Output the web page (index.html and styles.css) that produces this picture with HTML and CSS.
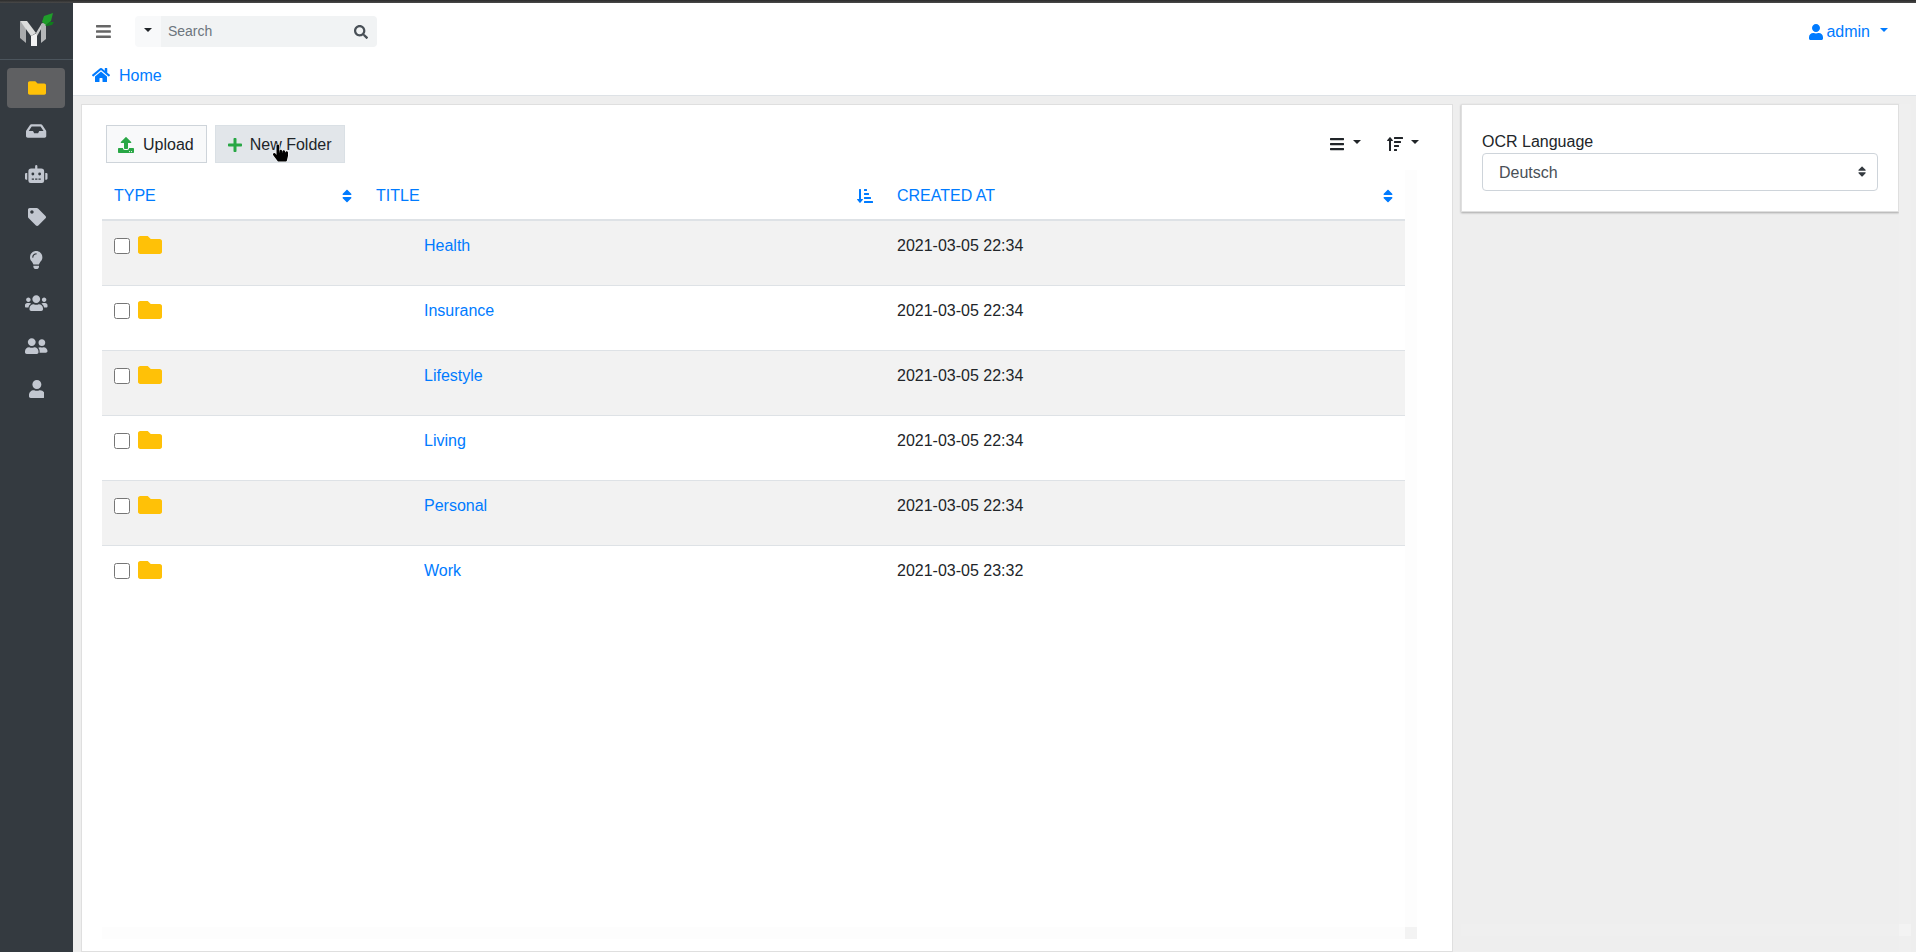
FILE: index.html
```html
<!DOCTYPE html>
<html lang="en">
<head>
  <meta charset="UTF-8" />
  <meta name="viewport" content="width=device-width, initial-scale=1.0"/>
  <title>Documents</title>
  <link rel="stylesheet" href="styles.css">
</head>
<body>

  <!-- Icon set -->
  <svg class="icon-defs" aria-hidden="true">
    <defs>
      <path id="i-folder" d="M464 128H272l-64-64H48C21.49 64 0 85.49 0 112v288c0 26.51 21.49 48 48 48h416c26.51 0 48-21.49 48-48V176c0-26.51-21.49-48-48-48z"/>
      <path id="i-inbox" d="M567.938 243.908L462.25 85.374A48.003 48.003 0 0 0 422.311 64H153.689a48 48 0 0 0-39.938 21.374L8.062 243.908A47.994 47.994 0 0 0 0 270.533V400c0 26.51 21.49 48 48 48h480c26.51 0 48-21.49 48-48V270.533a47.994 47.994 0 0 0-8.062-26.625zM162.252 128h251.497l85.333 128H376l-32 64H232l-32-64H76.918l85.334-128z"/>
      <path id="i-robot" d="M32,224H64V416H32A31.96166,31.96166,0,0,1,0,384V256A31.96166,31.96166,0,0,1,32,224Zm512-48V448a64.06328,64.06328,0,0,1-64,64H160a64.06328,64.06328,0,0,1-64-64V176a79.974,79.974,0,0,1,80-80H288V32a32,32,0,0,1,64,0V96H464A79.974,79.974,0,0,1,544,176ZM264,256a40,40,0,1,0-40,40A39.997,39.997,0,0,0,264,256Zm-8,128H192v32h64Zm96,0H288v32h64ZM456,256a40,40,0,1,0-40,40A39.997,39.997,0,0,0,456,256Zm-8,128H384v32h64ZM640,256V384a31.96166,31.96166,0,0,1-32,32H576V224h32A31.96166,31.96166,0,0,1,640,256Z"/>
      <path id="i-tag" d="M0 252.118V48C0 21.49 21.49 0 48 0h204.118a48 48 0 0 1 33.941 14.059l211.882 211.882c18.745 18.745 18.745 49.137 0 67.882L293.823 497.941c-18.745 18.745-49.137 18.745-67.882 0L14.059 286.059A48 48 0 0 1 0 252.118zM112 64c-26.51 0-48 21.49-48 48s21.49 48 48 48 48-21.49 48-48-21.49-48-48-48z"/>
      <path id="i-bulb" d="M96.06 454.35c.01 6.29 1.87 12.45 5.36 17.69l17.09 25.69a31.99 31.99 0 0 0 26.64 14.28h61.71a31.99 31.99 0 0 0 26.64-14.28l17.09-25.69a31.989 31.989 0 0 0 5.36-17.69l.04-38.35H96.01l.05 38.35zM0 176c0 44.37 16.45 84.85 43.56 115.78 16.52 18.85 42.36 58.23 52.21 91.45.04.26.07.52.11.78h160.24c.04-.26.07-.51.11-.78 9.85-33.22 35.69-72.6 52.21-91.45C335.55 260.85 352 220.37 352 176 352 78.61 272.91-.3 175.45 0 73.44.31 0 82.97 0 176zm176-80c-44.11 0-80 35.89-80 80 0 8.84-7.16 16-16 16s-16-7.16-16-16c0-61.76 50.24-112 112-112 8.84 0 16 7.16 16 16s-7.16 16-16 16z"/>
      <path id="i-users" d="M96 224c35.3 0 64-28.7 64-64s-28.7-64-64-64-64 28.7-64 64 28.7 64 64 64zm448 0c35.3 0 64-28.7 64-64s-28.7-64-64-64-64 28.7-64 64 28.7 64 64 64zm32 32h-64c-17.6 0-33.5 7.1-45.1 18.6 40.3 22.1 68.9 62 75.1 109.4h66c17.7 0 32-14.3 32-32v-32c0-35.3-28.7-64-64-64zm-256 0c61.9 0 112-50.1 112-112S381.9 32 320 32 208 82.1 208 144s50.1 112 112 112zm76.8 32h-8.3c-20.8 10-43.9 16-68.5 16s-47.6-6-68.5-16h-8.3C179.6 288 128 339.6 128 403.2V432c0 26.5 21.5 48 48 48h288c26.5 0 48-21.5 48-48v-28.8c0-63.6-51.6-115.2-115.2-115.2zm-223.7-13.4C161.5 263.1 145.6 256 128 256H64c-35.3 0-64 28.7-64 64v32c0 17.7 14.3 32 32 32h65.9c6.3-47.4 34.9-87.3 75.2-109.4z"/>
      <path id="i-friends" d="M192 256c61.9 0 112-50.1 112-112S253.9 32 192 32 80 82.1 80 144s50.1 112 112 112zm76.8 32h-8.3c-20.8 10-43.9 16-68.5 16s-47.6-6-68.5-16h-8.3C51.6 288 0 339.6 0 403.2V432c0 26.5 21.5 48 48 48h288c26.5 0 48-21.5 48-48v-28.8c0-63.6-51.6-115.2-115.2-115.2zM480 256c53 0 96-43 96-96s-43-96-96-96-96 43-96 96 43 96 96 96zm48 32h-3.8c-13.9 4.8-28.6 8-44.2 8s-30.3-3.2-44.2-8H432c-20.4 0-39.2 5.9-55.7 15.4 24.4 26.3 39.7 61.2 39.7 99.8v38.4c0 2.2-.5 4.3-.6 6.4H592c26.5 0 48-21.5 48-48 0-61.9-50.1-112-112-112z"/>
      <path id="i-user" d="M224 256c70.7 0 128-57.3 128-128S294.7 0 224 0 96 57.3 96 128s57.3 128 128 128zm89.6 32h-16.7c-22.2 10.2-46.9 16-72.9 16s-50.6-5.8-72.9-16h-16.7C60.2 288 0 348.2 0 422.4V464c0 26.5 21.5 48 48 48h352c26.5 0 48-21.5 48-48v-41.6c0-74.2-60.2-134.4-134.4-134.4z"/>
      <path id="i-home" d="M280.37 148.26L96 300.11V464a16 16 0 0 0 16 16l112.06-.29a16 16 0 0 0 15.92-16V368a16 16 0 0 1 16-16h64a16 16 0 0 1 16 16v95.64a16 16 0 0 0 16 16.05L464 480a16 16 0 0 0 16-16V300L295.67 148.26a12.19 12.19 0 0 0-15.3 0zM571.6 251.47L488 182.56V44.05a12 12 0 0 0-12-12h-56a12 12 0 0 0-12 12v72.61L318.47 43a48 48 0 0 0-61 0L4.34 251.47a12 12 0 0 0-1.6 16.9l25.5 31A12 12 0 0 0 45.15 301l235.22-193.74a12.19 12.19 0 0 1 15.3 0L530.9 301a12 12 0 0 0 16.9-1.6l25.5-31a12 12 0 0 0-1.7-16.93z"/>
      <path id="i-search" d="M505 442.7L405.3 343c-4.5-4.5-10.6-7-17-7H372c27.6-35.3 44-79.7 44-128C416 93.1 322.9 0 208 0S0 93.1 0 208s93.1 208 208 208c48.3 0 92.7-16.4 128-44v16.3c0 6.4 2.5 12.5 7 17l99.7 99.7c9.4 9.4 24.6 9.4 33.9 0l28.3-28.3c9.4-9.4 9.4-24.6.1-34zM208 336c-70.7 0-128-57.2-128-128 0-70.7 57.2-128 128-128 70.7 0 128 57.2 128 128 0 70.7-57.2 128-128 128z"/>
      <path id="i-bars" d="M16 132h416c8.837 0 16-7.163 16-16V76c0-8.837-7.163-16-16-16H16C7.163 60 0 67.163 0 76v40c0 8.837 7.163 16 16 16zm0 160h416c8.837 0 16-7.163 16-16v-40c0-8.837-7.163-16-16-16H16c-8.837 0-16 7.163-16 16v40c0 8.837 7.163 16 16 16zm0 160h416c8.837 0 16-7.163 16-16v-40c0-8.837-7.163-16-16-16H16c-8.837 0-16 7.163-16 16v40c0 8.837 7.163 16 16 16z"/>
      <path id="i-plus" d="M416 208H272V64c0-17.67-14.33-32-32-32h-32c-17.67 0-32 14.33-32 32v144H32c-17.67 0-32 14.33-32 32v32c0 17.67 14.33 32 32 32h144v144c0 17.67 14.33 32 32 32h32c17.67 0 32-14.33 32-32V304h144c17.67 0 32-14.33 32-32v-32c0-17.67-14.33-32-32-32z"/>
      <path id="i-upload" d="M296 384h-80c-13.3 0-24-10.7-24-24V192h-87.7c-17.8 0-26.7-21.5-14.1-34.1L242.3 5.7c7.5-7.5 19.8-7.5 27.3 0l152.2 152.2c12.6 12.6 3.7 34.1-14.1 34.1H320v168c0 13.3-10.7 24-24 24zm216-8v112c0 13.3-10.7 24-24 24H24c-13.3 0-24-10.7-24-24V376c0-13.3 10.7-24 24-24h136v8c0 30.9 25.1 56 56 56h80c30.9 0 56-25.1 56-56v-8h136c13.3 0 24 10.7 24 24zm-124 88c0-11-9-20-20-20s-20 9-20 20 9 20 20 20 20-9 20-20zm64 0c0-11-9-20-20-20s-20 9-20 20 9 20 20 20 20-9 20-20z"/>
      <path id="i-sort" d="M41 288h238c21.4 0 32.1 25.9 17 41L177 448c-9.4 9.4-24.6 9.4-33.9 0L24 329c-15.1-15.1-4.4-41 17-41zm255-105L177 64c-9.4-9.4-24.6-9.4-33.9 0L24 183c-15.1 15.1-4.4 41 17 41h238c21.4 0 32.1-25.9 17-41z"/>
      <path id="i-sort-down" d="M240 96h64a16 16 0 0 0 16-16V48a16 16 0 0 0-16-16h-64a16 16 0 0 0-16 16v32a16 16 0 0 0 16 16zm0 128h128a16 16 0 0 0 16-16v-32a16 16 0 0 0-16-16H240a16 16 0 0 0-16 16v32a16 16 0 0 0 16 16zm256 192H240a16 16 0 0 0-16 16v32a16 16 0 0 0 16 16h256a16 16 0 0 0 16-16v-32a16 16 0 0 0-16-16zm-256-64h192a16 16 0 0 0 16-16v-32a16 16 0 0 0-16-16H240a16 16 0 0 0-16 16v32a16 16 0 0 0 16 16zm-64 0h-48V48a16 16 0 0 0-16-16H80a16 16 0 0 0-16 16v304H16c-14.19 0-21.37 17.24-11.29 27.31l80 96a16 16 0 0 0 22.62 0l80-96C197.35 369.26 190.22 352 176 352z"/>
      <path id="i-sort-up" d="M304 416h-64a16 16 0 0 0-16 16v32a16 16 0 0 0 16 16h64a16 16 0 0 0 16-16v-32a16 16 0 0 0-16-16zM16 160h48v304a16 16 0 0 0 16 16h32a16 16 0 0 0 16-16V160h48c14.21 0 21.39-17.24 11.31-27.31l-80-96a16 16 0 0 0-22.62 0l-80 96C-5.35 142.74 1.77 160 16 160zm416 0H240a16 16 0 0 0-16 16v32a16 16 0 0 0 16 16h192a16 16 0 0 0 16-16v-32a16 16 0 0 0-16-16zm-64 128H240a16 16 0 0 0-16 16v32a16 16 0 0 0 16 16h128a16 16 0 0 0 16-16v-32a16 16 0 0 0-16-16zM496 32H240a16 16 0 0 0-16 16v32a16 16 0 0 0 16 16h256a16 16 0 0 0 16-16V48a16 16 0 0 0-16-16z"/>
      <path id="i-hand" d="M448 240v96c0 3.084-.356 6.159-1.063 9.162l-32 136C410.686 499.23 394.562 512 376 512H168a40.004 40.004 0 0 1-32.35-16.473l-127.997-176c-12.993-17.866-9.043-42.883 8.822-55.876 17.867-12.994 42.884-9.043 55.877 8.823L104 315.992V40c0-22.091 17.908-40 40-40s40 17.909 40 40v200h8v-40c0-22.091 17.908-40 40-40s40 17.909 40 40v40h8v-24c0-22.091 17.908-40 40-40s40 17.909 40 40v24h8c0-22.091 17.908-40 40-40s40 17.909 40 40z"/>
    </defs>
  </svg>

  <div class="topline"></div>

  <div class="app">

    <!-- Sidebar -->
    <aside class="sidebar">
      <a class="brand" href="#">
        <svg class="brand-logo" viewBox="0 0 40 40">
          <polygon fill="#a9abad" points="4,10 4,27 10,32 10,17"/>
          <polygon fill="#dcdddd" points="4,10 11,10 20,22 15,25"/>
          <polygon fill="#f2f2f2" points="15,25 21,22 21,35 15,35"/>
          <polygon fill="#c9cacb" points="20,22 26,12 28,13 21,25"/>
          <polygon fill="#b4b6b8" points="25,14 30,10 30,28 25,32"/>
          <polygon fill="#1f9d2a" points="26,11 28,5 37,2 35,10 30,14"/>
          <polygon fill="#0f7d1c" points="29,15 34,11 38,11 36,14 31,15"/>
        </svg>
      </a>
      <nav class="side-nav">
        <a class="side-item active" href="#"><svg class="icon" viewBox="0 0 512 512"><use href="#i-folder"/></svg></a>
        <a class="side-item" href="#"><svg class="icon" viewBox="0 0 576 512"><use href="#i-inbox"/></svg></a>
        <a class="side-item" href="#"><svg class="icon" viewBox="0 0 640 512"><use href="#i-robot"/></svg></a>
        <a class="side-item" href="#"><svg class="icon" viewBox="0 0 512 512"><use href="#i-tag"/></svg></a>
        <a class="side-item" href="#"><svg class="icon" viewBox="0 0 352 512"><use href="#i-bulb"/></svg></a>
        <a class="side-item" href="#"><svg class="icon" viewBox="0 0 640 512"><use href="#i-users"/></svg></a>
        <a class="side-item" href="#"><svg class="icon" viewBox="0 0 640 512"><use href="#i-friends"/></svg></a>
        <a class="side-item" href="#"><svg class="icon" viewBox="0 0 448 512"><use href="#i-user"/></svg></a>
      </nav>
    </aside>

    <div class="page">

      <!-- Navbar -->
      <header class="header">
        <div class="navbar">
          <svg class="menu-btn" viewBox="0 0 448 512"><use href="#i-bars"/></svg>
          <div class="search">
            <span class="search-type"><span class="caret"></span></span>
            <span class="search-box">
              <input class="search-input" type="text" placeholder="Search">
              <svg class="search-icon" viewBox="0 0 512 512"><use href="#i-search"/></svg>
            </span>
          </div>
          <a class="user-menu" href="#">
            <svg class="user-icon" viewBox="0 0 448 512"><use href="#i-user"/></svg>
            <span>admin</span>
            <span class="caret"></span>
          </a>
        </div>
        <div class="breadcrumb">
          <svg class="home-icon" viewBox="0 0 576 512"><use href="#i-home"/></svg>
          <a href="#">Home</a>
        </div>
      </header>

      <div class="content">

        <!-- Dokuman listesi -->
        <main class="card card-main">
          <div class="toolbar">
            <button class="btn" type="button"><svg class="btn-icon" viewBox="0 0 512 512"><use href="#i-upload"/></svg>Upload</button>
            <button class="btn btn-hover" type="button"><svg class="btn-icon" viewBox="0 0 448 512"><use href="#i-plus"/></svg>New Folder</button>
            <div class="view-tools">
              <span class="view-tool"><svg class="view-icon" viewBox="0 0 448 512"><use href="#i-bars"/></svg><span class="caret"></span></span>
              <span class="view-tool"><svg class="view-icon" viewBox="0 0 512 512"><use href="#i-sort-up"/></svg><span class="caret"></span></span>
            </div>
          </div>

          <div class="table-wrap">
            <table class="doc-table">
              <thead>
                <tr>
                  <th class="col-type"><a class="th-link" href="#">TYPE<svg class="sort-icon" viewBox="0 0 320 512"><use href="#i-sort"/></svg></a></th>
                  <th class="col-title"><a class="th-link" href="#">TITLE<svg class="sort-icon wide" viewBox="0 0 512 512"><use href="#i-sort-down"/></svg></a></th>
                  <th><a class="th-link" href="#">CREATED AT<svg class="sort-icon" viewBox="0 0 320 512"><use href="#i-sort"/></svg></a></th>
                </tr>
              </thead>
              <tbody>
                <tr>
                  <td><div class="type-cell"><input type="checkbox"><svg class="folder" viewBox="0 0 512 512"><use href="#i-folder"/></svg></div></td>
                  <td class="title-cell"><a href="#">Health</a></td>
                  <td class="date-cell">2021-03-05 22:34</td>
                </tr>
                <tr>
                  <td><div class="type-cell"><input type="checkbox"><svg class="folder" viewBox="0 0 512 512"><use href="#i-folder"/></svg></div></td>
                  <td class="title-cell"><a href="#">Insurance</a></td>
                  <td class="date-cell">2021-03-05 22:34</td>
                </tr>
                <tr>
                  <td><div class="type-cell"><input type="checkbox"><svg class="folder" viewBox="0 0 512 512"><use href="#i-folder"/></svg></div></td>
                  <td class="title-cell"><a href="#">Lifestyle</a></td>
                  <td class="date-cell">2021-03-05 22:34</td>
                </tr>
                <tr>
                  <td><div class="type-cell"><input type="checkbox"><svg class="folder" viewBox="0 0 512 512"><use href="#i-folder"/></svg></div></td>
                  <td class="title-cell"><a href="#">Living</a></td>
                  <td class="date-cell">2021-03-05 22:34</td>
                </tr>
                <tr>
                  <td><div class="type-cell"><input type="checkbox"><svg class="folder" viewBox="0 0 512 512"><use href="#i-folder"/></svg></div></td>
                  <td class="title-cell"><a href="#">Personal</a></td>
                  <td class="date-cell">2021-03-05 22:34</td>
                </tr>
                <tr>
                  <td><div class="type-cell"><input type="checkbox"><svg class="folder" viewBox="0 0 512 512"><use href="#i-folder"/></svg></div></td>
                  <td class="title-cell"><a href="#">Work</a></td>
                  <td class="date-cell">2021-03-05 23:32</td>
                </tr>
              </tbody>
            </table>
            <div class="track-v"></div>
            <div class="track-h"></div>
            <div class="track-corner"></div>
          </div>
        </main>

        <!-- Sag panel -->
        <div class="side-col">
          <section class="card card-side">
            <label class="field-label" for="ocrLang">OCR Language</label>
            <div class="select-wrap">
              <select class="select" id="ocrLang">
                <option>Deutsch</option>
              </select>
              <svg class="select-arrows" viewBox="0 0 320 512"><use href="#i-sort"/></svg>
            </div>
          </section>
          <div class="page-track-h"></div>
        </div>

        <div class="page-track-v">
          <div class="page-track-corner"></div>
        </div>
      </div>
    </div>
  </div>

  <!-- Mouse pointer from the screenshot -->
  <svg class="pointer" viewBox="0 0 448 512"><use href="#i-hand"/></svg>

</body>
</html>
```

FILE: styles.css
```css
/* Genel stil */
* {
  box-sizing: border-box;
}
html, body {
  height: 100%;
}
body {
  margin: 0;
  background-color: #eee;
  color: #212529;
  font-family: "Liberation Sans", Arial, sans-serif;
  font-size: 16px;
  line-height: 24px;
  overflow: hidden;
}
a {
  color: #007bff;
  text-decoration: none;
}
.icon-defs {
  display: none;
}
.topline {
  height: 3px;
  background: linear-gradient(#2b2b2b, #4a4a4a);
}
.app {
  display: flex;
  height: calc(100% - 3px);
}
.caret {
  display: inline-block;
  border-top: 4.8px solid;
  border-left: 4.8px solid transparent;
  border-right: 4.8px solid transparent;
}

/* Sidebar */
.sidebar {
  width: 73px;
  flex-shrink: 0;
  background-color: #343a40;
}
.brand {
  display: flex;
  justify-content: flex-start;
  align-items: flex-start;
  height: 57px;
  padding: 8px 0 0 16px;
  border-bottom: 1px solid #4b545c;
}
.brand-logo {
  width: 40px;
  height: 40px;
}
.side-nav {
  display: flex;
  flex-direction: column;
  gap: 3px;
  padding: 8px 8px 0 7px;
}
.side-item {
  display: flex;
  justify-content: center;
  align-items: center;
  height: 40px;
  padding-left: 1px;
  border-radius: 4px;
  color: #c2c7d0;
}
.side-item .icon {
  height: 18px;
  fill: currentColor;
}
.side-item.active {
  background-color: #5f6062;
  color: #ffc107;
}

/* Navbar */
.page {
  flex: 1;
  display: flex;
  flex-direction: column;
  min-width: 0;
}
.header {
  height: 93px;
  flex-shrink: 0;
  background: #fff;
  border-bottom: 1px solid #dee2e6;
}
.navbar {
  display: flex;
  align-items: center;
  height: 57px;
  padding: 0 28px 0 23px;
}
.menu-btn {
  height: 17px;
  margin-top: -1px;
  fill: #666;
}
.search {
  display: flex;
  width: 242px;
  height: 31px;
  margin-left: 24px;
  border-radius: 4px;
  overflow: hidden;
}
.search-type {
  display: flex;
  justify-content: center;
  align-items: center;
  width: 26px;
  padding-bottom: 3px;
  background: #f8f9fa;
}
.search-box {
  flex: 1;
  display: flex;
  align-items: center;
  padding: 0 9px 0 7px;
  background: #f1f3f4;
}
.search-input {
  flex: 1;
  min-width: 0;
  padding: 0 0 2px;
  border: none;
  outline: none;
  background: transparent;
  font: 14px "Liberation Sans", Arial, sans-serif;
}
.search-input::placeholder {
  color: #6c757d;
  opacity: 1;
}
.search-icon {
  height: 14px;
  fill: #495057;
}
.user-menu {
  display: flex;
  align-items: center;
  gap: 3px;
  margin-left: auto;
}
.user-menu .caret {
  margin: 0 0 3px 7px;
}
.user-icon {
  height: 16px;
  fill: currentColor;
}
.breadcrumb {
  display: flex;
  align-items: center;
  gap: 9px;
  height: 31px;
  padding-left: 19px;
}
.home-icon {
  height: 16px;
  margin-top: -1px;
  fill: #007bff;
}

/* Kartlar */
.content {
  flex: 1;
  display: flex;
  min-height: 0;
  padding: 8px 5px 0 8px;
}
.card {
  background: #fff;
  border: 1px solid #dfdfdf;
}
.card-main {
  display: flex;
  flex-direction: column;
  width: 1372px;
  height: 848px;
  padding: 20px 35px 0 20px;
}
.side-col {
  display: flex;
  flex-direction: column;
  width: 438px;
  margin-left: 8px;
}
.card-side {
  height: 108px;
  padding: 19px 20px 0 20px;
  box-shadow: 0 1px 2px rgba(0,0,0,0.3);
}
.page-track-h {
  height: 12px;
  margin-top: 712px;
  background: #efefef;
}
.page-track-v {
  position: relative;
  width: 12px;
  background: #efefef;
}
.page-track-corner {
  position: absolute;
  top: 820px;
  left: 0;
  width: 12px;
  height: 12px;
  background: #f3f3f3;
}

/* Toolbar */
.toolbar {
  display: flex;
  align-items: center;
  height: 38px;
  margin: 0 0 7px 4px;
}
.btn {
  display: flex;
  align-items: center;
  height: 38px;
  margin-right: 8px;
  padding: 1px 12px 0 11px;
  background: #f8f9fa;
  border: 1px solid #ced4da;
  color: #212529;
  font: 16px "Liberation Sans", Arial, sans-serif;
}
.btn-icon {
  height: 16px;
  margin-right: 9px;
  fill: #28a745;
}
.btn + .btn .btn-icon {
  margin-right: 8px;
}
.btn + .btn {
  padding-left: 12px;
}
.btn-hover {
  background: #e2e6ea;
  border-color: #dae0e5;
}
.view-tools {
  display: flex;
  align-items: center;
  margin-left: auto;
  gap: 26px;
  margin-right: -2px;
  padding-bottom: 1px;
}
.view-tool {
  display: flex;
  align-items: center;
  gap: 9px;
}
.view-tool + .view-tool {
  gap: 8px;
}
.view-tool .caret {
  margin-bottom: 3px;
}
.view-icon {
  height: 16px;
  fill: #212529;
}

/* Tablo */
.table-wrap {
  display: grid;
  grid-template-columns: 1303px 12px;
  grid-template-rows: 757px 12px;
}
.doc-table {
  align-self: start;
  width: 100%;
  table-layout: fixed;
  border-collapse: collapse;
}
.doc-table th {
  height: 50px;
  padding: 2px 12px 0;
  border-bottom: 2px solid #dee2e6;
  font-weight: normal;
  text-align: left;
}
.col-type {
  width: 262px;
}
.col-title {
  width: 521px;
}
.th-link {
  display: flex;
  justify-content: space-between;
  align-items: center;
}
.sort-icon {
  height: 16px;
  fill: #007bff;
}
.doc-table td {
  height: 65px;
  padding: 12px 12px 16px;
  border-bottom: 1px solid #dee2e6;
  vertical-align: top;
}
.doc-table tbody tr:nth-child(odd) {
  background: #f2f2f2;
}
.doc-table tbody tr:last-child td {
  border-bottom: none;
}
.type-cell {
  display: flex;
  align-items: center;
  gap: 8px;
  height: 24px;
}
.type-cell input {
  width: 16px;
  height: 16px;
  margin: 2px 0 0;
}
.folder {
  width: 24px;
  height: 24px;
  fill: #ffc107;
}
.doc-table .title-cell {
  padding: 13px 12px 15px 60px;
}
.doc-table .date-cell {
  padding: 13px 12px 15px;
}
.track-v {
  background: #fdfdfd;
}
.track-h {
  background: #fdfdfd;
}
.track-corner {
  background: #f3f3f3;
}

/* Sag panel form */
.field-label {
  display: block;
  height: 29px;
  margin: 0;
  padding-top: 6px;
}
.select-wrap {
  position: relative;
}
.select {
  display: block;
  width: 100%;
  height: 38px;
  padding: 0 16px 0 16px;
  appearance: none;
  background: #fff;
  border: 1px solid #ced4da;
  border-radius: 4px;
  color: #495057;
  font: 16px "Liberation Sans", Arial, sans-serif;
}
.select-arrows {
  position: absolute;
  top: 12px;
  right: 12px;
  height: 13px;
  fill: #343a40;
}

/* Screenshot pointer */
.pointer {
  position: absolute;
  left: 273px;
  top: 144px;
  width: 15px;
  height: 18px;
  fill: #000;
  stroke: #fff;
  stroke-width: 30px;
  paint-order: stroke;
  overflow: visible;
}
```
